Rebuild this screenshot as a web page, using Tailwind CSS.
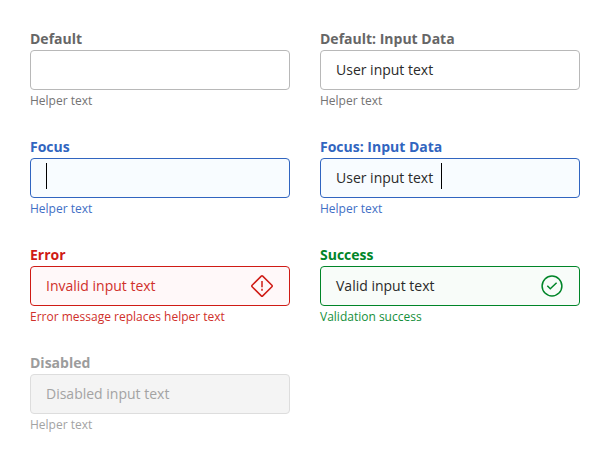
<!DOCTYPE html>
<html lang="en"><head><meta charset="utf-8"><title>Input states</title>
<script src="https://cdn.jsdelivr.net/npm/@tailwindcss/browser@4"></script></head>
<body class="bg-white font-['Open_Sans',sans-serif] antialiased">
<main class="grid grid-cols-[260px_260px] gap-x-[30px] gap-y-[28px] px-[30px] pt-[28px]">
<div class="h-20 text-[#666666]"><label class="block h-[22px] text-sm leading-[22px] font-bold">Default</label><div class="flex h-10 items-center rounded border border-[#b8b8b8] bg-white px-[15px]"></div><p class="pt-[2px] text-xs leading-[18px] text-[#737373]">Helper text</p></div>
<div class="h-20 text-[#666666]"><label class="block h-[22px] text-sm leading-[22px] font-bold">Default: Input Data</label><div class="flex h-10 items-center rounded border border-[#b8b8b8] bg-white px-[15px] text-sm text-[#2a2a2a]">User input text</div><p class="pt-[2px] text-xs leading-[18px] text-[#737373]">Helper text</p></div>
<div class="h-20 text-[#3165c0]"><label class="block h-[22px] text-sm leading-[22px] font-bold">Focus</label><div class="flex h-10 items-center rounded border border-[#3165c0] bg-[#f8fcff] px-[15px]"><span class="-mt-1 h-[26px] w-px bg-black"></span></div><p class="pt-[2px] text-xs leading-[18px] text-[#416fc5]">Helper text</p></div>
<div class="h-20 text-[#3165c0]"><label class="block h-[22px] text-sm leading-[22px] font-bold">Focus: Input Data</label><div class="flex h-10 items-center rounded border border-[#3165c0] bg-[#f8fcff] px-[15px] text-sm text-[#2a2a2a]">User input text<span class="-mt-1 ml-2 h-[26px] w-px bg-black"></span></div><p class="pt-[2px] text-xs leading-[18px] text-[#416fc5]">Helper text</p></div>
<div class="h-20 text-[#cf1b15]"><label class="block h-[22px] text-sm leading-[22px] font-bold">Error</label><div class="flex h-10 items-center justify-between rounded border border-[#cf1b15] bg-[#fff8f9] px-[15px] text-sm"><span class="text-[#d0302b]">Invalid input text</span><svg class="size-6" viewBox="0 0 24 24" fill="none" stroke="currentColor" stroke-width="1.5" stroke-linejoin="round"><path d="M11.3 2.1Q12 1.4 12.7 2.1L21.9 11.3Q22.6 12 21.9 12.7L12.7 21.9Q12 22.6 11.3 21.9L2.1 12.7Q1.4 12 2.1 11.3Z M12 7v6.3 M12 14.8v2"/></svg></div><p class="pt-[2px] text-xs leading-[18px] text-[#d0302b]">Error message replaces helper text</p></div>
<div class="h-20 text-[#008528]"><label class="block h-[22px] text-sm leading-[22px] font-bold">Success</label><div class="flex h-10 items-center justify-between rounded border border-[#008528] bg-[#f8fcf9] px-[15px] text-sm"><span class="text-[#2a2a2a]">Valid input text</span><svg class="size-6" viewBox="0 0 24 24" fill="none" stroke="currentColor" stroke-width="1.5"><circle cx="12" cy="12" r="9.9"/><path d="m7.3 11.8 3 3 6.3-6"/></svg></div><p class="pt-[2px] text-xs leading-[18px] text-[#158f3b]">Validation success</p></div>
<div class="h-20 text-[#9c9c9c]"><label class="block h-[22px] text-sm leading-[22px] font-bold">Disabled</label><div class="flex h-10 items-center rounded border border-[#dddddd] bg-[#f4f4f4] px-[15px] text-sm text-[#a3a3a3]">Disabled input text</div><p class="pt-[2px] text-xs leading-[18px] text-[#a3a3a3]">Helper text</p></div>
</main></body></html>
